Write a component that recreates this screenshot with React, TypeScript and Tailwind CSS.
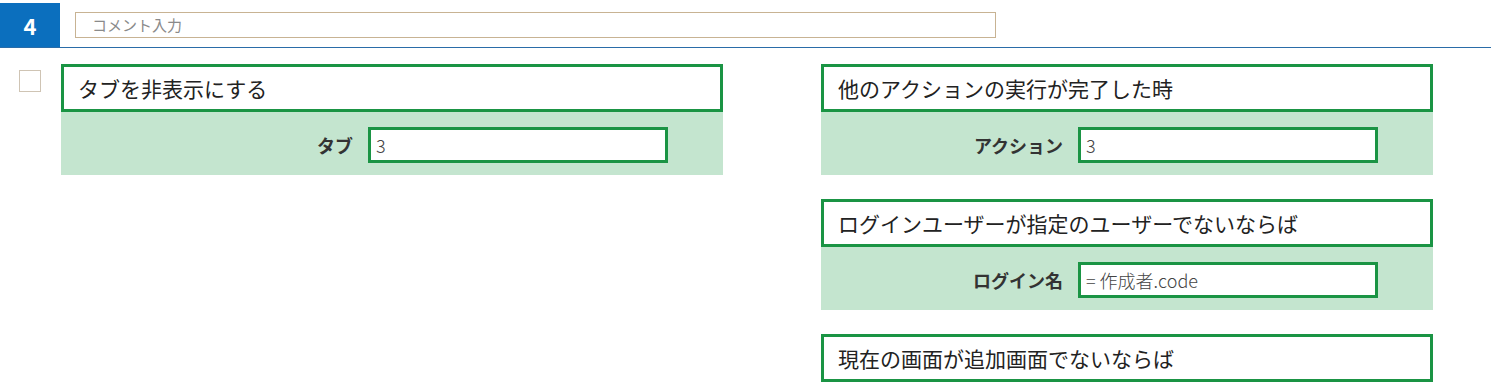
import React from 'react';

const font = { fontFamily: '"Noto Sans CJK JP", "Noto Sans", sans-serif' };

function Card({ title, label, value }: { title: string; label?: string; value?: string }) {
    return (
        <div className="flex flex-col">
            <div className="h-[48px] border-[3px] border-[#1a9444] bg-white flex items-center pl-[14px]">
                <span className="text-[21px] text-[#222] leading-none">{title}</span>
            </div>
            {label && (
                <div className="h-[63px] bg-[#c4e5cf] flex justify-end items-start pt-[15px] pr-[55px] gap-[15px]">
                    <span className="text-[18px] font-bold text-[#333] leading-[36px]">{label}</span>
                    <div className="w-[300px] h-[36px] border-[3px] border-[#1a9444] bg-white flex items-center pl-[5px]">
                        <span className="text-[18px] text-[#444] font-light">{value}</span>
                    </div>
                </div>
            )}
        </div>
    );
}

export default function App() {
    return (
        <div className="w-[1491px] h-[392px] bg-white overflow-hidden" style={font}>
            <div className="h-[48px] border-b border-[#2a6ca8] flex items-end">
                <div className="w-[60px] h-[44px] bg-[#0b6fbe] flex items-center justify-center">
                    <span className="text-white text-[22px] font-bold">4</span>
                </div>
                <div className="self-start mt-[12px] ml-[15px] w-[921px] h-[26px] border border-[#c8b393] flex items-center pl-[16px]">
                    <span className="text-[15px] text-[#8a8a8a]">コメント入力</span>
                </div>
            </div>
            <div className="flex pt-[16px]">
                <div className="ml-[19px] mt-[6px] w-[22px] h-[22px] border border-[#cfc4b4] bg-white" />
                <div className="ml-[20px] w-[662px]">
                    <Card title="タブを非表示にする" label="タブ" value="3" />
                </div>
                <div className="ml-[98px] w-[612px] flex flex-col gap-[24px]">
                    <Card title="他のアクションの実行が完了した時" label="アクション" value="3" />
                    <Card title="ログインユーザーが指定のユーザーでないならば" label="ログイン名" value="= 作成者.code" />
                    <Card title="現在の画面が追加画面でないならば" />
                </div>
            </div>
        </div>
    );
}
